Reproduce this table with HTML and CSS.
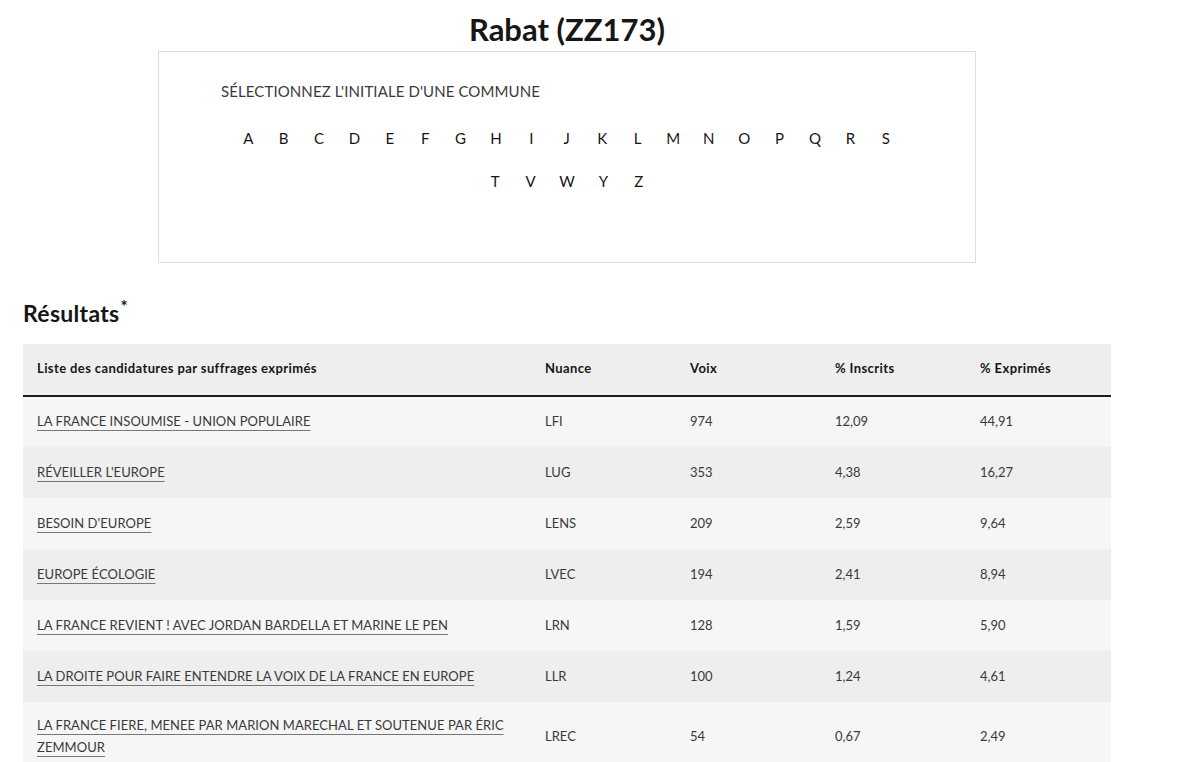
FILE: index.html
```html
<!DOCTYPE html>
<html lang="fr">
<head>
<meta charset="utf-8">
<title>Rabat (ZZ173)</title>
<link rel="stylesheet" href="styles.css">
</head>
<body>
<main class="page">
  <h1 class="title">Rabat (ZZ173)</h1>
  <section class="picker">
    <p class="picker-label">SÉLECTIONNEZ L'INITIALE D'UNE COMMUNE</p>
    <ul class="letters">
      <li><a href="#">A</a></li><li><a href="#">B</a></li><li><a href="#">C</a></li><li><a href="#">D</a></li><li><a href="#">E</a></li><li><a href="#">F</a></li><li><a href="#">G</a></li><li><a href="#">H</a></li><li><a href="#">I</a></li><li><a href="#">J</a></li><li><a href="#">K</a></li><li><a href="#">L</a></li><li><a href="#">M</a></li><li><a href="#">N</a></li><li><a href="#">O</a></li><li><a href="#">P</a></li><li><a href="#">Q</a></li><li><a href="#">R</a></li><li><a href="#">S</a></li><li><a href="#">T</a></li><li><a href="#">V</a></li><li><a href="#">W</a></li><li><a href="#">Y</a></li><li><a href="#">Z</a></li>
    </ul>
  </section>
  <h2 class="results-title">Résultats<sup>*</sup></h2>
  <table class="results">
    <thead>
      <tr>
        <th class="c-name">Liste des candidatures par suffrages exprimés</th>
        <th>Nuance</th>
        <th>Voix</th>
        <th>% Inscrits</th>
        <th>% Exprimés</th>
      </tr>
    </thead>
    <tbody>
      <tr><td class="c-name"><a href="#">LA FRANCE INSOUMISE - UNION POPULAIRE</a></td><td>LFI</td><td>974</td><td>12,09</td><td>44,91</td></tr>
      <tr><td class="c-name"><a href="#">RÉVEILLER L'EUROPE</a></td><td>LUG</td><td>353</td><td>4,38</td><td>16,27</td></tr>
      <tr><td class="c-name"><a href="#">BESOIN D'EUROPE</a></td><td>LENS</td><td>209</td><td>2,59</td><td>9,64</td></tr>
      <tr><td class="c-name"><a href="#">EUROPE ÉCOLOGIE</a></td><td>LVEC</td><td>194</td><td>2,41</td><td>8,94</td></tr>
      <tr><td class="c-name"><a href="#">LA FRANCE REVIENT ! AVEC JORDAN BARDELLA ET MARINE LE PEN</a></td><td>LRN</td><td>128</td><td>1,59</td><td>5,90</td></tr>
      <tr><td class="c-name"><a href="#">LA DROITE POUR FAIRE ENTENDRE LA VOIX DE LA FRANCE EN EUROPE</a></td><td>LLR</td><td>100</td><td>1,24</td><td>4,61</td></tr>
      <tr><td class="c-name"><a href="#">LA FRANCE FIERE, MENEE PAR MARION MARECHAL ET SOUTENUE PAR ÉRIC ZEMMOUR</a></td><td>LREC</td><td>54</td><td>0,67</td><td>2,49</td></tr>
    </tbody>
  </table>
</main>
</body>
</html>
```

FILE: styles.css
```css
* { box-sizing: border-box; }

body {
  margin: 0;
  font-family: "Lato", "Noto Sans", sans-serif;
  color: #161616;
  background: #fff;
}

.page {
  width: 1088px;
  margin-left: 23px;
}

.title {
  margin: 0;
  padding-top: 11px;
  height: 51px;
  text-align: center;
  font-size: 31px;
  line-height: 36px;
  font-weight: 700;
  color: #161616;
}

.picker {
  width: 818px;
  height: 212px;
  margin: 0 auto;
  border: 1px solid #dddddd;
  padding: 29px 62px 0;
}

.picker-label {
  margin: 0;
  font-size: 15px;
  line-height: 20px;
  color: #3a3a3a;
  letter-spacing: 0.1px;
}

.letters {
  list-style: none;
  margin: 27px auto 0;
  padding: 0;
  width: 692px;
  display: flex;
  flex-wrap: wrap;
  justify-content: center;
  row-gap: 23px;
}

.letters li a {
  display: block;
  padding: 0 11px;
  font-size: 15px;
  line-height: 20px;
  color: #161616;
  text-decoration: none;
  min-width: 35.4px;
  text-align: center;
}

.results-title {
  margin: 35px 0 0;
  font-size: 23px;
  line-height: 30px;
  font-weight: 700;
  color: #161616;
  height: 46px;
  letter-spacing: 0.3px;
}

.results-title sup {
  font-size: 17px;
  vertical-align: top;
  position: relative;
  top: -6px;
  margin-left: 1px;
}

.results {
  width: 1088px;
  border-collapse: collapse;
  table-layout: fixed;
  font-size: 13px;
  color: #3a3a3a;
}

.results th, .results td {
  text-align: left;
  padding: 0 14px;
  width: 145px;
}

.results th.c-name, .results td.c-name {
  width: 508px;
}

.results thead tr {
  background: #eeeeee;
  border-bottom: 2px solid #1e1e1e;
}

.results th {
  height: 52px;
  padding-bottom: 4px;
  font-weight: 700;
  color: #161616;
  letter-spacing: 0.4px;
}

.results td {
  height: 51px;
  line-height: 22px;
  padding-bottom: 2px;
}

.results tbody tr:nth-child(odd) { background: #f6f6f6; }
.results tbody tr:nth-child(even) { background: #eeeeee; }

.results td.c-name {
  padding-right: 22px;
}

.results td a {
  color: #3a3a3a;
  text-decoration: underline;
  text-decoration-color: #777;
  text-underline-offset: 4px;
  text-decoration-thickness: 1px;
  letter-spacing: 0.05px;
}

.results tbody tr:last-child td {
  padding-top: 12px;
  padding-bottom: 7px;
}
```
